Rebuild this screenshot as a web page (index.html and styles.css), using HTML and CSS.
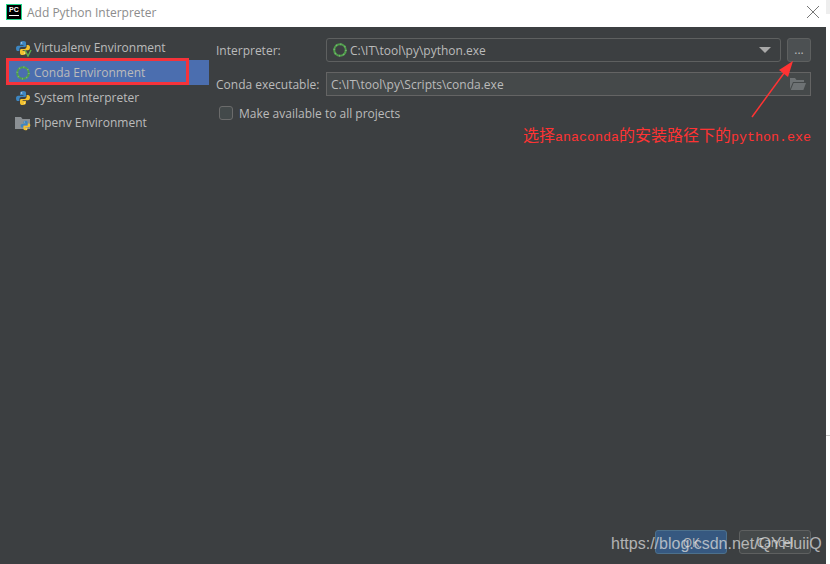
FILE: index.html
```html
<!DOCTYPE html>
<html lang="en">
<head>
    <meta charset="UTF-8">
    <meta name="viewport" content="width=device-width, initial-scale=1.0">
    <title>Add Python Interpreter</title>
    <link rel="stylesheet" href="styles.css">
</head>
<body>
    <svg class="sprites" width="0" height="0">
        <symbol id="python" viewBox="0 0 16 16">
            <path fill="#3d86c0" d="M8.2 1C5.6 1 5 2 5 3.2V5h3.4v.7H3.1C1.8 5.7 1 6.8 1 8.4S1.8 11 3 11h1.4V9.2c0-1.2 1-2.1 2.2-2.1h3C10.4 7.100 11 6.400 11 5.500V3.100C11 1.900 10.400 1 8.200 1z"/>
            <path fill="#f2c12e" d="M8.200 1C5.600 1 5 2 5 3.200V5h3.400v.7H3.100C1.800 5.700 1 6.800 1 8.400S1.800 11 3 11h1.400V9.200c0-1.200 1-2.100 2.200-2.100h3C10.400 7.100 11 6.400 11 5.500V3.100C11 1.900 10.400 1 8.200 1z" transform="rotate(180 8 8)"/>
            <circle cx="6.600" cy="2.900" r=".7" fill="#dfe8ef"/>
            <circle cx="9.400" cy="13.100" r=".7" fill="#fff3c4"/>
        </symbol>
        <symbol id="conda" viewBox="0 0 16 16">
            <circle cx="8" cy="8" r="5.800" fill="none" stroke="#4f9e4a" stroke-width="2"/>
            <circle cx="8" cy="8" r="5.800" fill="none" stroke="#8fc98a" stroke-width="2" stroke-dasharray="1 3.500" opacity=".6"/>
        </symbol>
    </svg>

    <div class="dialog">
        <div class="titlebar">
            <span class="app-logo"><span class="app-logo-text">PC</span></span>
            <span class="title">Add Python Interpreter</span>
            <svg class="close-icon" width="14" height="14" viewBox="0 0 14 14">
                <path d="M1 1l12 12M13 1L1 13" stroke="#777" stroke-width="1" fill="none"/>
            </svg>
        </div>

        <div class="content">
            <ul class="env-list">
                <li class="env-item">
                    <span class="env-icon">
                        <svg width="16" height="16"><use href="#python"/></svg>
                        <svg class="env-badge" width="8" height="8" viewBox="0 0 8 8"><path d="M1 1l3 6 3-6" fill="none" stroke="#5fb04f" stroke-width="1.400"/></svg>
                    </span>
                    Virtualenv Environment
                </li>
                <li class="env-item selected">
                    <span class="env-icon"><svg width="16" height="16"><use href="#conda"/></svg></span>
                    Conda Environment
                </li>
                <li class="env-item">
                    <span class="env-icon"><svg width="16" height="16"><use href="#python"/></svg></span>
                    System Interpreter
                </li>
                <li class="env-item">
                    <span class="env-icon">
                        <svg width="16" height="16" viewBox="0 0 16 16"><path d="M0 2h6l1.500 2H15v10H0z" fill="#8b9094"/></svg>
                        <svg class="env-badge-large" width="11" height="11"><use href="#python"/></svg>
                    </span>
                    Pipenv Environment
                </li>
            </ul>

            <div class="form">
                <div class="form-row">
                    <label class="form-label">Interpreter:</label>
                    <div class="combo">
                        <svg width="16" height="16"><use href="#conda"/></svg>
                        <span class="combo-text">C:\IT\tool\py\python.exe</span>
                        <span class="combo-arrow"></span>
                    </div>
                    <button class="browse-btn">...</button>
                </div>
                <div class="form-row">
                    <label class="form-label">Conda executable:</label>
                    <div class="path-field">
                        <span class="path-text">C:\IT\tool\py\Scripts\conda.exe</span>
                        <svg width="16" height="14" viewBox="0 0 16 14">
                            <path d="M0 1h5l1.500 2H14v2H3L0 12z" fill="#6e7274"/>
                            <path d="M3.600 6H16l-2.600 7H.800z" fill="#6e7274"/>
                        </svg>
                    </div>
                </div>
                <div class="check-row">
                    <span class="checkbox"></span>
                    <span>Make available to all projects</span>
                </div>
            </div>
        </div>

        <div class="footer">
            <button class="btn btn-primary">OK</button>
            <button class="btn">Cancel</button>
        </div>

        <!-- annotations drawn over the screenshot -->
        <div class="mark-box"></div>
        <svg class="mark-arrow" width="60" height="70" viewBox="0 0 60 70">
            <path d="M11 66L46 18" stroke="#f33" stroke-width="1.500" fill="none"/>
            <path d="M52 10L38 19 47 26z" fill="#f33"/>
        </svg>
        <div class="mark-note">选择<span class="mark-latin">anaconda</span>的安装路径下的<span class="mark-latin">python.exe</span></div>
        <div class="watermark">https://blog.csdn.net/QYHuiiQ</div>
    </div>
    <div class="page-edge"></div>
</body>
</html>
```

FILE: styles.css
```css
body {
    margin: 0;
    height: 564px;
    display: flex;
    overflow: hidden;
    background-color: #fff;
    font-family: "Open Sans", "Noto Sans", sans-serif;
    font-size: 12px;
    color: #bbb;
}

.sprites {
    position: absolute;
}

.dialog {
    width: 826px;
    height: 564px;
    display: flex;
    flex-direction: column;
    position: relative;
    background-color: #3c3f41;
}

.page-edge {
    flex: 1;
    background: linear-gradient(#eee 14px, #fff 14px, #fff 435px, #ccc 435px, #ccc 436px, #fff 436px);
}

.titlebar {
    height: 27px;
    display: flex;
    align-items: center;
    padding: 0 7px 3px 6px;
    box-sizing: border-box;
    background-color: #fff;
}

.app-logo {
    width: 16px;
    height: 16px;
    box-sizing: border-box;
    border: 1px solid #21d789;
    background-color: #000;
    display: flex;
    justify-content: center;
    flex-shrink: 0;
    position: relative;
}

.app-logo-text {
    color: #fff;
    font-family: "Liberation Sans", sans-serif;
    font-size: 7px;
    font-weight: bold;
    line-height: 9px;
    border-bottom: 1px solid #fff;
    height: 10px;
    width: 10px;
}

.title {
    margin-left: 5px;
    color: #8c8c8c;
    flex: 1;
}

.close-icon {
    margin-right: -1px;
}

.content {
    flex: 1;
    display: flex;
    min-height: 0;
}

.env-list {
    width: 209px;
    box-sizing: border-box;
    list-style: none;
    margin: 0;
    padding: 8px 0 0 8px;
    flex-shrink: 0;
}

.env-item {
    height: 25px;
    display: flex;
    align-items: center;
    gap: 3px;
    padding-left: 7px;
}

.env-item.selected {
    background-color: #4b6eaf;
}

.env-icon {
    width: 16px;
    height: 16px;
    position: relative;
}

.env-badge {
    position: absolute;
    right: -1px;
    bottom: -1px;
}

.env-badge-large {
    position: absolute;
    right: 0;
    bottom: 0;
}

.form {
    flex: 1;
    padding: 11px 15px 0 7px;
    display: flex;
    flex-direction: column;
    gap: 10px;
}

.form-row {
    display: flex;
    height: 24px;
    align-items: stretch;
}

.form-label {
    width: 110px;
    flex-shrink: 0;
    align-self: center;
}

.combo {
    flex: 1;
    box-sizing: border-box;
    border: 1px solid #5e6060;
    border-radius: 3px;
    display: flex;
    align-items: center;
    gap: 2px;
    padding: 0 9px 0 5px;
}

.combo-text {
    flex: 1;
}

.combo-arrow {
    width: 0;
    height: 0;
    border-left: 6px solid transparent;
    border-right: 6px solid transparent;
    border-top: 6px solid #a9a9a9;
}

.browse-btn {
    width: 24px;
    margin-left: 6px;
    padding: 0 0 2px;
    box-sizing: border-box;
    border: 1px solid #5e6060;
    border-radius: 3px;
    background-color: #4c5052;
    color: #bbb;
    font-family: inherit;
    font-size: 12px;
}

.path-field {
    flex: 1;
    box-sizing: border-box;
    border: 1px solid #646464;
    background-color: #45494a;
    display: flex;
    align-items: center;
    padding: 0 4px;
    color: #bbb;
}

.path-text {
    flex: 1;
}

.check-row {
    display: flex;
    align-items: center;
    gap: 6px;
    margin: -1px 0 0 3px;
    height: 16px;
}

.checkbox {
    width: 14px;
    height: 14px;
    box-sizing: border-box;
    border: 1px solid #6b6b6b;
    border-radius: 3px;
    background-color: #43494a;
}

.footer {
    display: flex;
    justify-content: flex-end;
    gap: 12px;
    padding: 0 15px 10px 0;
}

.btn {
    width: 72px;
    height: 24px;
    box-sizing: border-box;
    border: 1px solid #5e6060;
    border-radius: 3px;
    background-color: #45494a;
    color: #bbb;
    font-family: inherit;
    font-size: 12px;
    padding: 0;
}

.btn-primary {
    background-color: #365880;
    border-color: #4c708c;
}

.mark-box {
    position: absolute;
    left: 6px;
    top: 58px;
    width: 183px;
    height: 27px;
    box-sizing: border-box;
    border: 3px solid #f5333a;
}

.mark-arrow {
    position: absolute;
    left: 741px;
    top: 51px;
}

.mark-note {
    position: absolute;
    left: 523px;
    top: 124px;
    font-family: "Noto Sans CJK SC", sans-serif;
    font-size: 16px;
    line-height: 20px;
    color: #f33;
    white-space: nowrap;
}

.mark-latin {
    font-family: "Liberation Mono", monospace;
    font-size: 13.33px;
}

.watermark {
    position: absolute;
    left: 611px;
    top: 534px;
    font-family: "Liberation Sans", sans-serif;
    font-size: 16px;
    line-height: 20px;
    color: rgba(225, 225, 225, 0.72);
    white-space: nowrap;
}
```
